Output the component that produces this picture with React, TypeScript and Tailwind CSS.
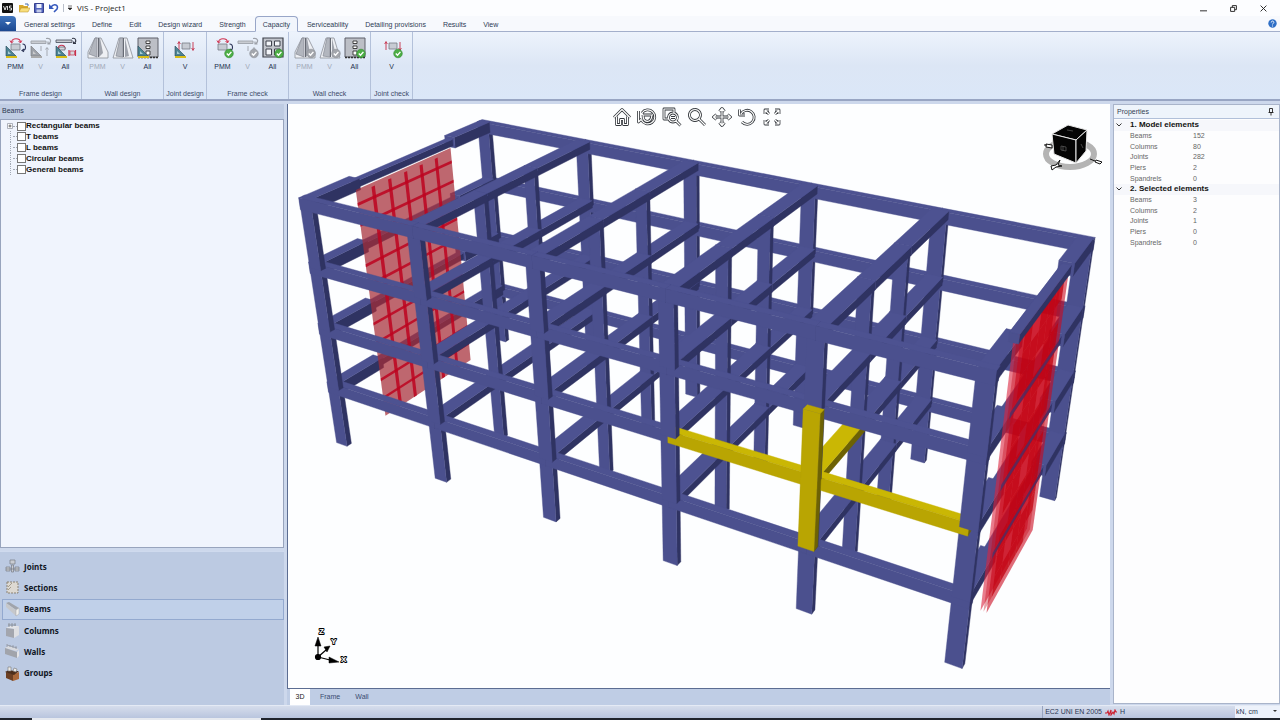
import type { ReactNode } from 'react';
import clsx from 'clsx';

/* ---------- 3D model ---------- */

type Vec = [number, number, number];
type Palette = { front: string; top: string; side: string };

const BLUE: Palette = { front: '#4b508e', top: '#4d5291', side: '#2f3362' };
const YELLOW: Palette = { front: '#b9a502', top: '#cab704', side: '#6d6204' };
const YELLOW_COLUMN: Palette = { front: '#b9a502', top: '#b9a502', side: '#6d6204' };

const ROWS = [0, 0.35, 0.65, 1];
const LEVELS = [0, 0.25, 0.5, 0.75, 1];
const BAYS = [0, 1, 2, 3, 4, 5];
const WALL_START = 0.235;
const WALL_END = 0.775;

// x: bays along the front, y: 0 front .. 1 back, z: 0 ground .. 1 roof
function project([x, y, z]: Vec) {
  const w = 1 - 0.0453 * x + 0.158 * y - 0.09 * z;
  const px = (344 + 78.9 * x + 237.7 * y - 63.7 * z) / w;
  const py = (443 + 13.97 * x - 50 * y - 257.4 * z) / w;
  return `${px.toFixed(1)},${py.toFixed(1)}`;
}

const points = (...list: Vec[]) => list.map(project).join(' ');

function Box({ from, to, colors = BLUE }: { from: Vec; to: Vec; colors?: Palette }) {
  const [x0, y0, z0] = from;
  const [x1, y1, z1] = to;
  return (
    <g strokeWidth="0.4" strokeLinejoin="round">
      <polygon fill={colors.side} stroke={colors.side} points={points([x1, y0, z0], [x1, y1, z0], [x1, y1, z1], [x1, y0, z1])} />
      <polygon fill={colors.top} stroke={colors.top} points={points([x0, y0, z1], [x1, y0, z1], [x1, y1, z1], [x0, y1, z1])} />
      <polygon fill={colors.front} stroke={colors.front} points={points([x0, y0, z0], [x1, y0, z0], [x1, y0, z1], [x0, y0, z1])} />
    </g>
  );
}

const isEnd = (x: number) => x === 0 || x === 5;

function RowFrame({ row }: { row: number }) {
  const y = ROWS[row];
  const outer = row === 0 || row === 3;
  const half = outer ? 0.055 : 0.046;
  return (
    <g>
      {[1, 2, 3, 4].map((k) => (
        <g key={k}>
          {BAYS.filter((x) => outer || !isEnd(x)).map((x) => (
            <Box key={x} from={[x - half, y - 0.012, LEVELS[k - 1]]} to={[x + half, y + 0.012, LEVELS[k] + (k === 4 ? 0.01 : 0)]} />
          ))}
          {outer &&
            [0, 1, 2, 3, 4].map((x) => {
              const selected = row === 0 && k === 2 && x >= 3;
              return (
                <Box
                  key={x}
                  from={[x === 0 ? -0.055 : x, y - 0.014, LEVELS[k] - 0.022]}
                  to={[x === 4 && !selected ? 5.055 : x + 1, y + 0.018, LEVELS[k] + 0.023]}
                  colors={selected ? YELLOW : BLUE}
                />
              );
            })}
        </g>
      ))}
    </g>
  );
}

function CrossBeams({ segment }: { segment: number }) {
  const y0 = ROWS[segment];
  const y1 = ROWS[segment + 1];
  return (
    <g>
      {[1, 2, 3, 4].map((k) => (
        <g key={k}>
          {[1, 2, 3, 4].map((x) => (
            <Box
              key={x}
              from={[x - 0.06, y0, LEVELS[k] - 0.008]}
              to={[x + 0.06, y1, LEVELS[k] + 0.023]}
              colors={x === 4 && k === 2 && segment === 0 ? YELLOW : BLUE}
            />
          ))}
        </g>
      ))}
    </g>
  );
}

function EndBeams({ x }: { x: number }) {
  return (
    <g>
      {[1, 2, 3, 4].map((k) => {
        const z = LEVELS[k];
        return (
          <g key={k}>
            <Box from={[x - 0.05, WALL_END, z - 0.02]} to={[x + 0.05, 1, z + 0.024]} />
            <Box from={[x - 0.03, WALL_START, z - 0.012]} to={[x + 0.03, WALL_END, z + 0.014]} />
            <Box from={[x - 0.05, 0, z - 0.02]} to={[x + 0.05, WALL_START, z + 0.024]} />
          </g>
        );
      })}
    </g>
  );
}

const wallY = (i: number) => WALL_START + ((WALL_END - WALL_START) * i) / 6;

function wallFace(x: number, top = 0.975, start = WALL_START) {
  return points([x, start, 0], [x, WALL_END, 0], [x, WALL_END, top], [x, start, top]);
}

function LeftWall() {
  return (
    <g>
      <polygon points={wallFace(0)} fill="#a52c38" fillOpacity="0.72" />
      <g fill="#bd0420" fillOpacity="0.85">
        {[1, 2, 3, 4, 5].map((i) => {
          const y = wallY(i);
          return <polygon key={i} points={points([0, y - 0.009, 0], [0, y + 0.009, 0], [0, y + 0.009, 0.96], [0, y - 0.009, 0.96])} />;
        })}
        {[1, 2, 4, 5, 7, 8, 10, 11].map((i) => {
          const z = i / 12;
          return <polygon key={i} points={points([0, WALL_START, z - 0.006], [0, WALL_END, z - 0.006], [0, WALL_END, z + 0.006], [0, WALL_START, z + 0.006])} />;
        })}
      </g>
    </g>
  );
}

function RightWall() {
  const start = 0.27;
  const step = (WALL_END - start) / 6;
  const cells = [];
  for (let j = 0; j < 12; j++) {
    for (let i = 0; i < 6; i++) {
      const z0 = j / 12.3;
      const z1 = (j + 1) / 12.3;
      const y0 = start + i * step;
      cells.push(
        <polygon
          key={`${i}-${j}`}
          fill="#c0000e"
          fillOpacity={i === 0 || (i * 2 + j) % 5 === 0 ? 0.35 : 0.75}
          points={points([5, y0, z0], [5, y0 + step, z0], [5, y0 + step, z1], [5, y0, z1])}
        />,
      );
    }
  }
  return (
    <g>
      <polygon points={wallFace(4.98, 0.975, start)} fill="#dc2440" fillOpacity="0.6" />
      <polygon points={wallFace(5.02, 0.975, start)} fill="#cc0a20" fillOpacity="0.6" />
      {cells}
    </g>
  );
}

function ViewCube() {
  return (
    <g>
      <ellipse cx="1070" cy="154" rx="24" ry="13" fill="none" stroke="#b4b4b4" strokeWidth="6" />
      <g stroke="#e8e8e8" strokeWidth="1" strokeLinejoin="round" fill="#050505">
        <path d="M1052 134l16-9 19 5-11 10z" />
        <path d="M1052 134l24 6v23l-22-9z" />
        <path d="M1076 140l11-10-1 21-10 12z" />
      </g>
      <g fill="none" stroke="#555" strokeWidth="0.8">
        <path d="M1061 146l5 1v4l-5-1zM1063 146v5M1067 130l6 1M1081 144l2 4" />
      </g>
      <g fill="#fff" stroke="#111" strokeWidth="1">
        <path d="M1046 144l6 1v3l-6-1zM1044 145h3" />
        <path d="M1060 160l-4 5-5 1 1 4 4-3 6-1-4-1z" />
        <path d="M1090 159l5 2M1096 160l6 2-2 2-5-2z" />
      </g>
    </g>
  );
}

function AxisTriad() {
  return (
    <g>
      <g stroke="#000" strokeWidth="1.2" fill="#000">
        <path d="M318 657v-12M318 657l8-7M318 657l12 3" />
        <path d="M315 646l3-9 3 9zM324 647l6-1-3 6zM329 657l10 5-10 1z" strokeWidth="0.5" />
        <circle cx="318" cy="657" r="2.5" />
      </g>
      <g
        fill="#fff"
        stroke="#000"
        strokeWidth="1.8"
        strokeLinejoin="round"
        style={{ paintOrder: 'stroke' }}
        fontFamily="Liberation Sans, sans-serif"
        fontSize="8"
        fontWeight="bold"
      >
        <text x="319" y="634">Z</text>
        <text x="331" y="644">Y</text>
        <text x="341" y="662">X</text>
      </g>
    </g>
  );
}

function ModelView() {
  return (
    <svg viewBox="288 104 822 584" className="block h-full w-full" role="img" aria-label="3D model">
      <RowFrame row={3} />
      <EndBeams x={0} />
      <LeftWall />
      <CrossBeams segment={2} />
      <RowFrame row={2} />
      <CrossBeams segment={1} />
      <RowFrame row={1} />
      <CrossBeams segment={0} />
      <EndBeams x={5} />
      <RightWall />
      {/* beam edges showing through the wall */}
      <g fill="#3b3570" fillOpacity="0.7">
        {[0.25, 0.5, 0.75].map((z) => (
          <polygon key={z} points={points([5.03, WALL_START, z - 0.012], [5.03, WALL_END, z - 0.012], [5.03, WALL_END, z + 0.01], [5.03, WALL_START, z + 0.01])} />
        ))}
      </g>
      <Box from={[4.97, WALL_START, 0.985]} to={[5.03, WALL_END, 1.015]} />
      <RowFrame row={0} />
      <Box from={[3.945, -0.018, 0.25]} to={[4.055, 0.01, 0.745]} colors={YELLOW_COLUMN} />
      <ViewCube />
      <AxisTriad />
    </svg>
  );
}

/* ---------- Icons ---------- */

function Glyph({ children }: { children: ReactNode }) {
  return (
    <svg viewBox="0 0 22 22" className="size-[22px]" fill="none" aria-hidden="true">
      {children}
    </svg>
  );
}

function SetSquare({ gray }: { gray?: boolean }) {
  return (
    <g>
      <path d="M1 9v10h10z" fill={gray ? '#9da1a8' : '#4d8392'} stroke={gray ? '#777' : '#274b5c'} strokeWidth="0.6" />
      <path d="M3 14v3h3z" fill={gray ? '#ccc' : '#a9cdd6'} />
      <path d="M1 20h11" stroke={gray ? '#aaa' : '#d9bd18'} strokeWidth="2" />
    </g>
  );
}

function Check({ gray }: { gray?: boolean }) {
  return (
    <g>
      <circle cx="17" cy="16.500" r="4.300" fill={gray ? '#a3a6ac' : '#4cae45'} stroke={gray ? '#8d9097' : '#338a31'} strokeWidth="0.6" />
      <path d="M14.800 16.500l1.700 1.800 2.900-3.400" stroke="#fff" strokeWidth="1.400" />
    </g>
  );
}

function MomentArrows() {
  return (
    <g>
      <path d="M6 7h9v6h-9z" fill="#c7cbd3" stroke="#777b86" strokeWidth="0.8" />
      <path d="M6.500 5.500c0-5 9-5 9 0" stroke="#d0314f" strokeWidth="1.200" />
      <path d="M5 3.500l1.500 2.500 2-1.800M13.500 4l2 2 1.300-2.500" stroke="#d0314f" />
      <path d="M17.500 7c4 0 4 6.500 0 6.500M19 12l-2 1.500 2 1.300" stroke="#2d3558" strokeWidth="1.100" />
    </g>
  );
}

function ShearBeam({ gray }: { gray?: boolean }) {
  const ink = gray ? '#9da1a9' : '#555a66';
  return (
    <g stroke={ink}>
      <path d="M1 4h15v2.500h-15z" fill="#c9ccd2" strokeWidth="0.9" />
      <path d="M16 1.500c5-1 6 3 2.500 5.500M20.500 7h-2.500v-2.500" strokeWidth="1.200" />
      <path d="M17 19v-8M15.500 12.500l1.500-2 1.500 2M11 9v5" strokeWidth="0.9" />
    </g>
  );
}

function Tower({ narrow }: { narrow?: boolean }) {
  return (
    <g>
      <path d={narrow ? 'M7 1h8l6 20h-20z' : 'M8 1h6l7 14v6h-20v-6z'} fill="#eef0f4" stroke="#8b8f98" strokeWidth="0.8" />
      <path d={narrow ? 'M8 1l-4 18 7 1v-19z' : 'M8 1l-6 16 8 3v-19z'} fill="#b2b6be" stroke="#878b95" strokeWidth="0.7" />
      <path d={narrow ? 'M13 1l4 18-4 1z' : 'M12 1h1l3 15-4 4z'} fill="#9fa3ac" />
      <path d="M11.500 1v19" stroke="#666a73" strokeWidth="1" />
    </g>
  );
}

function WallBlock() {
  return (
    <g>
      <path d="M1 1h20v19h-20z" fill="#bcbfc6" stroke="#5e616a" strokeWidth="1" />
      <path d="M9 4h4v2.500h-4zM9 9h4v2.500h-4zM9 14h4v4h-4z" fill="#fff" stroke="#333" strokeWidth="0.9" />
      <path d="M1 20.500h20" stroke="#333" strokeWidth="1.400" strokeDasharray="2 1" />
    </g>
  );
}

function JointBox() {
  return (
    <g>
      <path d="M8 6h8v6h-8z" fill="#c7cbd3" stroke="#777b86" strokeWidth="0.8" />
      <path d="M5 13v-8M3.700 7l1.300-2.500 1.300 2.500M19 5v8M17.700 11l1.300 2.500 1.300-2.500" stroke="#c9425b" strokeWidth="1" />
    </g>
  );
}

const icons: Record<string, ReactNode> = {
  pmmDesign: <Glyph><MomentArrows /><SetSquare /></Glyph>,
  vDesign: <Glyph><ShearBeam gray /><SetSquare gray /></Glyph>,
  allDesign: (
    <Glyph>
      <path d="M1 3h16v2.500h-16z" fill="#c9ccd2" stroke="#555a66" strokeWidth="0.9" />
      <path d="M17 1.500c4-1 5 3 2 5M21 6.500h-2.500v-2" stroke="#333846" strokeWidth="1.100" />
      <path d="M3 12c0-5 7-5 7 0M14 13v6M20.500 13v6" stroke="#c9314c" strokeWidth="1.200" />
      <path d="M4 10h6v3h-6z" fill="#d5d8de" stroke="#555a66" strokeWidth="0.7" />
      <path d="M15 14h4.500v4h-4.500z" fill="#d5d8de" stroke="#c9314c" strokeWidth="0.7" />
      <SetSquare />
    </Glyph>
  ),
  tower: <Glyph><Tower /></Glyph>,
  towerNarrow: <Glyph><Tower narrow /></Glyph>,
  wallDesign: <Glyph><WallBlock /><SetSquare /></Glyph>,
  jointDesign: <Glyph><JointBox /><SetSquare /></Glyph>,
  pmmCheck: <Glyph><MomentArrows /><Check /></Glyph>,
  vCheck: <Glyph><ShearBeam gray /><Check gray /></Glyph>,
  allCheck: (
    <Glyph>
      <path d="M1 1h20v19h-20z" fill="#c3c6cd" stroke="#3f434c" strokeWidth="1.200" />
      <path d="M4 4h5.500v5h-5.500zM12.500 4h5.500v5h-5.500zM4 12h5.500v6h-5.500zM12.500 12h5.500v6h-5.500z" fill="#f4f6fa" stroke="#3f434c" />
      <Check />
    </Glyph>
  ),
  towerCheck: <Glyph><Tower /><Check gray /></Glyph>,
  towerNarrowCheck: <Glyph><Tower narrow /><Check gray /></Glyph>,
  wallCheck: <Glyph><WallBlock /><Check /></Glyph>,
  jointCheck: <Glyph><JointBox /><Check /></Glyph>,
};

// Dark outline with a white core
function OutlineIcon({ d }: { d: string }) {
  return (
    <svg viewBox="0 0 20 20" className="size-5" fill="none" strokeLinejoin="round" aria-hidden="true">
      <path d={d} stroke="#33373c" strokeWidth="2.800" />
      <path d={d} stroke="#fff" strokeWidth="1.200" />
    </svg>
  );
}

const viewTools = [
  { label: 'Home', d: 'M2 10.500l8-8 8 8M4.500 9.500v8h4v-5h3v5h4v-8' },
  { label: 'Orbit', d: 'M5 6a7 7 0 1 1-.5 7M1.500 4v11l3-3M6 8h9M6 8c0 8 8 9 9 0' },
  { label: 'Zoom window', d: 'M7 12h-5v-10h10v4M13.500 13.500l5 5M11 6a4.500 4.500 0 1 1-.1 0M9 10.500h4' },
  { label: 'Zoom', d: 'M12 12l6 6M8 2.500a5.500 5.500 0 1 1-.1 0' },
  { label: 'Pan', d: 'M10 2v16M2 10h16M7.500 4.500l2.500-3 2.500 3M7.500 15.500l2.500 3 2.500-3M4.500 7.500l-3 2.500 3 2.500M15.500 7.500l3 2.500-3 2.500' },
  { label: 'Rotate', d: 'M4 7a7 7 0 1 1 1 8M2.500 2.500v5.500h5.500' },
  { label: 'Fit', d: 'M3 7v-4h4M3 3l4 4M13 3h4v4M17 3l-4 4M3 13v4h4M3 17l4-4M17 13v4h-4M17 17l-4-4' },
];

const navIcons: Record<string, ReactNode> = {
  Joints: (
    <g fill="#c9ccd2" stroke="#777b85" strokeWidth="0.7">
      <path d="M5 1h5v4h-5zM1 8h4v4h-4zM10 8h4v4h-4zM6.500 6h2v7h-2zM1 10h13" />
    </g>
  ),
  Sections: (
    <g>
      <path d="M2 2h11v11h-11z" fill="#ddd9d2" stroke="#8a8173" strokeDasharray="2 1" />
      <path d="M3 7l4-4M3 10l3-3" stroke="#8a8173" strokeWidth="0.7" />
    </g>
  ),
  Beams: (
    <g>
      <path d="M1 1l3-1 10 6-3 2z" fill="#a0a4ab" />
      <path d="M1 1l10 7v6l-10-9z" fill="#c6c8cb" />
      <path d="M11 8l3-2v6l-3 2z" fill="#f1f1ee" stroke="#999" strokeWidth="0.4" />
    </g>
  ),
  Columns: (
    <g>
      <path d="M1 5l4-2h9l-4 3z" fill="#e4e5e8" />
      <path d="M1 5l8 1v9l-8-2z" fill="#a3a6ae" />
      <path d="M9 6l5-3v9l-5 3z" fill="#dedfe2" />
      <path d="M4 4v-4M7 4v-4M10 3v-3M3 2h8" stroke="#868a93" strokeWidth="0.8" />
    </g>
  ),
  Walls: (
    <g>
      <path d="M0 4l3-2 11 3-3 2z" fill="#d9dade" />
      <path d="M0 4l12 4v6l-12-4z" fill="#a1a4ab" />
      <path d="M12 8l2-2v6l-2 2z" fill="#e4e4e6" />
      <path d="M2 3v-3M5 3v-2M8 4v-3M11 5v-3M2 1l10 3" stroke="#8c9099" strokeWidth="0.7" />
    </g>
  ),
  Groups: (
    <g>
      <path d="M1 6l7 2v7l-7-3z" fill="#6d4023" />
      <path d="M8 8l6-2v7l-6 2z" fill="#a9683a" />
      <path d="M0 6l4-2 5 1 5 0-5 4z" fill="#4d2e1a" />
      <path d="M3 5v-4h3v4zM8 5l1-3 3 1-1 3z" fill="#eceae5" stroke="#777" strokeWidth="0.6" />
    </g>
  ),
};

/* ---------- Data ---------- */

const tabs = ['General settings', 'Define', 'Edit', 'Design wizard', 'Strength', 'Capacity', 'Serviceability', 'Detailing provisions', 'Results', 'View'];

const ribbon = [
  { title: 'Frame design', width: 'w-[82px]', items: [['PMM', 'pmmDesign'], ['V', 'vDesign', 'off'], ['All', 'allDesign']] },
  { title: 'Wall design', width: 'w-[82px]', items: [['PMM', 'tower', 'off'], ['V', 'towerNarrow', 'off'], ['All', 'wallDesign']] },
  { title: 'Joint design', width: 'w-[43px]', items: [['V', 'jointDesign']] },
  { title: 'Frame check', width: 'w-[82px]', items: [['PMM', 'pmmCheck'], ['V', 'vCheck', 'off'], ['All', 'allCheck']] },
  { title: 'Wall check', width: 'w-[82px]', items: [['PMM', 'towerCheck', 'off'], ['V', 'towerNarrowCheck', 'off'], ['All', 'wallCheck']] },
  { title: 'Joint check', width: 'w-[42px]', items: [['V', 'jointCheck']] },
];

const beamTypes = ['Rectangular beams', 'T beams', 'L beams', 'Circular beams', 'General beams'];
const navItems = ['Joints', 'Sections', 'Beams', 'Columns', 'Walls', 'Groups'];

const properties = [
  { title: '1. Model elements', rows: [['Beams', 152], ['Columns', 80], ['Joints', 282], ['Piers', 2], ['Spandrels', 0]] },
  { title: '2. Selected elements', rows: [['Beams', 3], ['Columns', 2], ['Joints', 1], ['Piers', 0], ['Spandrels', 0]] },
];

/* ---------- Layout ---------- */

function TitleBar() {
  return (
    <header className="flex h-4 shrink-0 items-center bg-[#fcfdff] pl-[2px]">
      <svg viewBox="0 0 11 10" className="mr-[6px] h-[10px] w-[11px]" aria-hidden="true">
        <rect width="11" height="10" rx="1" fill="#111" />
        <path d="M1.500 3l1.500 4 1.500-4M5.500 3v4M9.500 3h-2v2h2v2h-2" fill="none" stroke="#eee" strokeWidth="0.9" />
      </svg>
      <button aria-label="Open" className="mr-1">
        <svg viewBox="0 0 11 10" className="h-[10px] w-[11px]">
          <path d="M0 2h4l1 1h4v6h-9z" fill="#d8a92d" />
          <path d="M2 5h9l-2 4h-9z" fill="#f8de7c" stroke="#b58d22" strokeWidth="0.5" />
          <path d="M6 1h3v2" fill="none" stroke="#456db0" />
        </svg>
      </button>
      <button aria-label="Save" className="mr-[5px]">
        <svg viewBox="0 0 10 10" className="size-[10px]">
          <path d="M0.500 0.500h9v9h-9z" fill="#5163bd" stroke="#343f8f" />
          <path d="M2.500 1h5v4h-5z" fill="#eef2fc" />
          <path d="M2.500 6.500h5v3h-5z" fill="#c0c9e8" />
        </svg>
      </button>
      <button aria-label="Undo">
        <svg viewBox="0 0 10 10" className="size-[10px]">
          <path d="M2 4c3-4 8-2 6 2l-3 3" fill="none" stroke="#3558bd" strokeWidth="1.600" />
          <path d="M0 1v5h5z" fill="#3558bd" />
        </svg>
      </button>
      <span className="ml-1 h-2 w-px bg-[#b9bfca]" />
      <button aria-label="Customize toolbar" className="mr-1 ml-[3px]">
        <svg viewBox="0 0 6 6" className="size-[6px]">
          <path d="M1 1h4M1 3h4l-2 2z" fill="#222" stroke="#222" strokeWidth="0.6" />
        </svg>
      </button>
      <h1 className="font-['Open_Sans',sans-serif] text-[8px] leading-4 text-[#222]">VIS - Project1</h1>
      <div className="ml-auto flex items-center gap-[23px] pr-[13px] text-[#222]">
        {[
          ['Minimize', 'M0 5h6'],
          ['Restore', 'M0.500 2h3.500v3.500h-3.500zM2 2v-1.500h3.500v3.500h-1.500'],
          ['Close', 'M0.500 0.500l5 5M5.500 0.500l-5 5'],
        ].map(([label, d]) => (
          <button key={label} aria-label={label}>
            <svg viewBox="0 0 6 6" className="size-[7px]" fill="none" stroke="currentColor" strokeWidth="0.800">
              <path d={d} />
            </svg>
          </button>
        ))}
      </div>
    </header>
  );
}

function Ribbon() {
  return (
    <>
      <nav className="flex h-4 shrink-0 items-stretch border-b border-[#a3afcb] bg-[#f7f9fd]">
        <button aria-label="Application menu" className="flex w-4 items-center justify-center rounded-tr-sm bg-linear-to-b from-[#3f74bd] to-[#1c4890]">
          <svg viewBox="0 0 6 4" className="h-1 w-[6px]"><path d="M0 0h6l-3 3z" fill="#fff" /></svg>
        </button>
        <div className="flex gap-px">
          {tabs.map((tab) => (
            <button
              key={tab}
              className={clsx(
                'border px-[7px] pt-px text-[7px] leading-[14px] whitespace-nowrap text-[#2f3c55]',
                tab === 'Capacity' ? '-mb-px rounded-t-sm border-[#98a6c8] border-b-[#eaf1fb] bg-[#f1f5fc]' : 'border-transparent',
              )}
            >
              {tab}
            </button>
          ))}
        </div>
        <button aria-label="Help" className="mr-[3px] ml-auto">
          <svg viewBox="0 0 9 9" className="size-[9px]">
            <circle cx="4.500" cy="4.500" r="4.200" fill="#2f6fc6" />
            <path d="M3.200 3.500c0-2 2.800-1.800 2.600 0 0 .9-1.300.9-1.300 2M4.500 6.500v1" fill="none" stroke="#fff" strokeWidth="0.900" />
          </svg>
        </button>
      </nav>
      <div className="flex h-[69px] shrink-0 border-b-2 border-[#98a5c3] bg-linear-to-b from-[#edf3fc] via-[#dce6f5] to-[#dbe7f8]">
        {ribbon.map((group) => (
          <section key={group.title} className={clsx('flex flex-col border-r border-[#b3c1da] pt-[5px]', group.width)}>
            <div className="flex px-[3px]">
              {group.items.map(([label, icon, state]) => (
                <button key={icon} disabled={state === 'off'} className="flex flex-1 flex-col items-center text-[7px] leading-4 text-[#222f4c] disabled:text-[#a1a9b8]">
                  {icons[icon]}
                  {label}
                </button>
              ))}
            </div>
            <h2 className="mt-auto self-center text-[7px] leading-[11px] whitespace-nowrap text-[#3c4a68]">{group.title}</h2>
          </section>
        ))}
      </div>
    </>
  );
}

function Sidebar() {
  return (
    <aside className="flex w-[284px] shrink-0 flex-col">
      <h2 className="h-[15px] shrink-0 bg-[#bfcce3] pl-[2px] text-[7px] leading-[14px] text-[#2d3850]">Beams</h2>
      <div className="min-h-0 flex-1 border border-[#98a4bd] bg-[#f0f4fd] pt-px pl-[6px]">
        <ul className="flex h-[53px] flex-col">
          {beamTypes.map((name, i) => (
            <li key={name} className="flex flex-1 items-center">
              <span className="flex w-[6px] shrink-0 justify-center">
                {i === 0 ? (
                  <button aria-label="Expand">
                    <svg viewBox="0 0 6 6" className="block size-[6px]" fill="none">
                      <path d="M0.500 0.500h5v5h-5z" fill="#fff" stroke="#9aa0ac" strokeWidth="0.8" />
                      <path d="M1.500 3h3M3 1.500v3" stroke="#333" strokeWidth="0.7" />
                    </svg>
                  </button>
                ) : (
                  <span className="h-[11px] border-l border-dotted border-[#a3a9b5]" />
                )}
              </span>
              <span className="w-1 border-t border-dotted border-[#a3a9b5]" />
              <label className="flex items-center text-[8px] leading-[10px] font-bold text-[#111]">
                <input type="checkbox" className="size-[9px] appearance-none border border-[#777] bg-white" />
                {name}
              </label>
            </li>
          ))}
        </ul>
      </div>
      <nav className="mt-[3px] flex h-[154px] shrink-0 flex-col border-t border-[#cfdaee] bg-[#bccae2] pt-1">
        <div className="flex h-32 flex-col">
          {navItems.map((item) => (
            <button
              key={item}
              className={clsx(
                "ml-[2px] flex flex-1 items-center gap-1 border pl-[2px] font-['Noto_Sans',sans-serif] text-[8px] leading-[12px] font-bold text-[#10161f]",
                item === 'Beams' ? 'border-[#93a9cf] bg-[#c0d0e9]' : 'border-transparent',
              )}
            >
              <svg viewBox="0 0 15 15" className="size-[15px]" fill="none" aria-hidden="true">{navIcons[item]}</svg>
              {item}
            </button>
          ))}
        </div>
      </nav>
    </aside>
  );
}

function Viewport() {
  return (
    <main className="flex min-w-0 flex-1 flex-col">
      <div className="relative min-h-0 flex-1 border-b border-l border-[#5c6d92] bg-[#fdfeff]">
        <ModelView />
        <div className="absolute inset-x-0 top-[3px] flex justify-center gap-[5px] pr-[5px]">
          {viewTools.map((tool) => (
            <button key={tool.label} aria-label={tool.label}>
              <OutlineIcon d={tool.d} />
            </button>
          ))}
        </div>
      </div>
      <div className="flex h-4 shrink-0 bg-[#bfcde5] pl-[3px] text-[7px] leading-[14px] text-[#3a4c70]">
        <button className="w-5 bg-white text-[#222]">3D</button>
        <button className="w-10">Frame</button>
        <button className="w-6">Wall</button>
      </div>
    </main>
  );
}

function Properties() {
  return (
    <aside className="mb-px flex w-[167px] shrink-0 flex-col border border-[#a9b4ca] bg-[#fdfdfe]">
      <div className="flex h-[14px] shrink-0 items-center border-b border-[#b1c0d9] bg-[#eef4fb] pr-[5px] pl-[3px]">
        <h2 className="text-[7px] leading-[12px] text-[#333e52]">Properties</h2>
        <button aria-label="Pin" className="ml-auto">
          <svg viewBox="0 0 6 8" className="h-2 w-[6px]" fill="none" stroke="#222">
            <path d="M1.500 0.500h3v4h-3zM0.500 4.500h5M3 4.500v3" strokeWidth="0.900" />
          </svg>
        </button>
      </div>
      <table className="mt-px h-32 w-full text-[7px] text-[#666]">
        {properties.map((group) => (
          <tbody key={group.title} className="leading-[8px]">
            <tr>
              <th colSpan={2} className="bg-[#f6f7fb] p-0 text-left text-[8px] font-bold text-[#111]">
                <button className="flex items-center leading-[8px]">
                  <svg viewBox="0 0 6 4" className="mr-2 ml-[2px] h-1 w-[6px]" fill="none"><path d="M0.500 0.500l2.500 2.500 2.500-2.500" stroke="#333" /></svg>
                  {group.title}
                </button>
              </th>
            </tr>
            {group.rows.map(([name, value]) => (
              <tr key={name}>
                <th scope="row" className="w-[79px] p-0 pl-4 text-left font-normal">{name}</th>
                <td className="p-0">{value}</td>
              </tr>
            ))}
          </tbody>
        ))}
      </table>
    </aside>
  );
}

function StatusBar() {
  return (
    <footer className="shrink-0">
      <div className="flex h-[13px] items-center justify-end border-t border-[#e4eaf5] bg-linear-to-b from-[#d6ddec] to-[#b9c5de] text-[7px] leading-[12px] text-[#2a3754]">
        <span className="border-l border-[#98a5c0] pl-[2px]">EC2 UNI EN 2005</span>
        <svg viewBox="0 0 12 7" className="mx-[3px] h-[7px] w-3" fill="none" aria-hidden="true">
          <path d="M0 4h2l1-2 1 4 2-5v5l2-3 1 2 1-4 1 2h1" stroke="#cc1f2f" strokeWidth="1.100" />
        </svg>
        <span>H</span>
        <div className="relative ml-[110px] w-[45px] bg-[#edf2fb]">
          <select aria-label="Units" className="block w-full appearance-none pl-px text-[7px] leading-[12px]">
            <option>kN, cm</option>
          </select>
          <svg viewBox="0 0 4 3" className="pointer-events-none absolute top-1 right-[3px] h-[3px] w-1"><path d="M0 0h4l-2 2z" fill="#333" /></svg>
        </div>
      </div>
      <div className="flex h-[2px] bg-[#20242c]">
        <span className="ml-8 w-[229px] bg-[#e6e9ef]" />
      </div>
    </footer>
  );
}

export default function App() {
  return (
    <div className="flex h-screen flex-col overflow-hidden bg-[#cdd8ec] font-['Liberation_Sans',Arial,sans-serif]">
      <TitleBar />
      <Ribbon />
      <div className="flex min-h-0 flex-1 gap-[3px] pt-[3px]">
        <Sidebar />
        <Viewport />
        <Properties />
      </div>
      <StatusBar />
    </div>
  );
}
